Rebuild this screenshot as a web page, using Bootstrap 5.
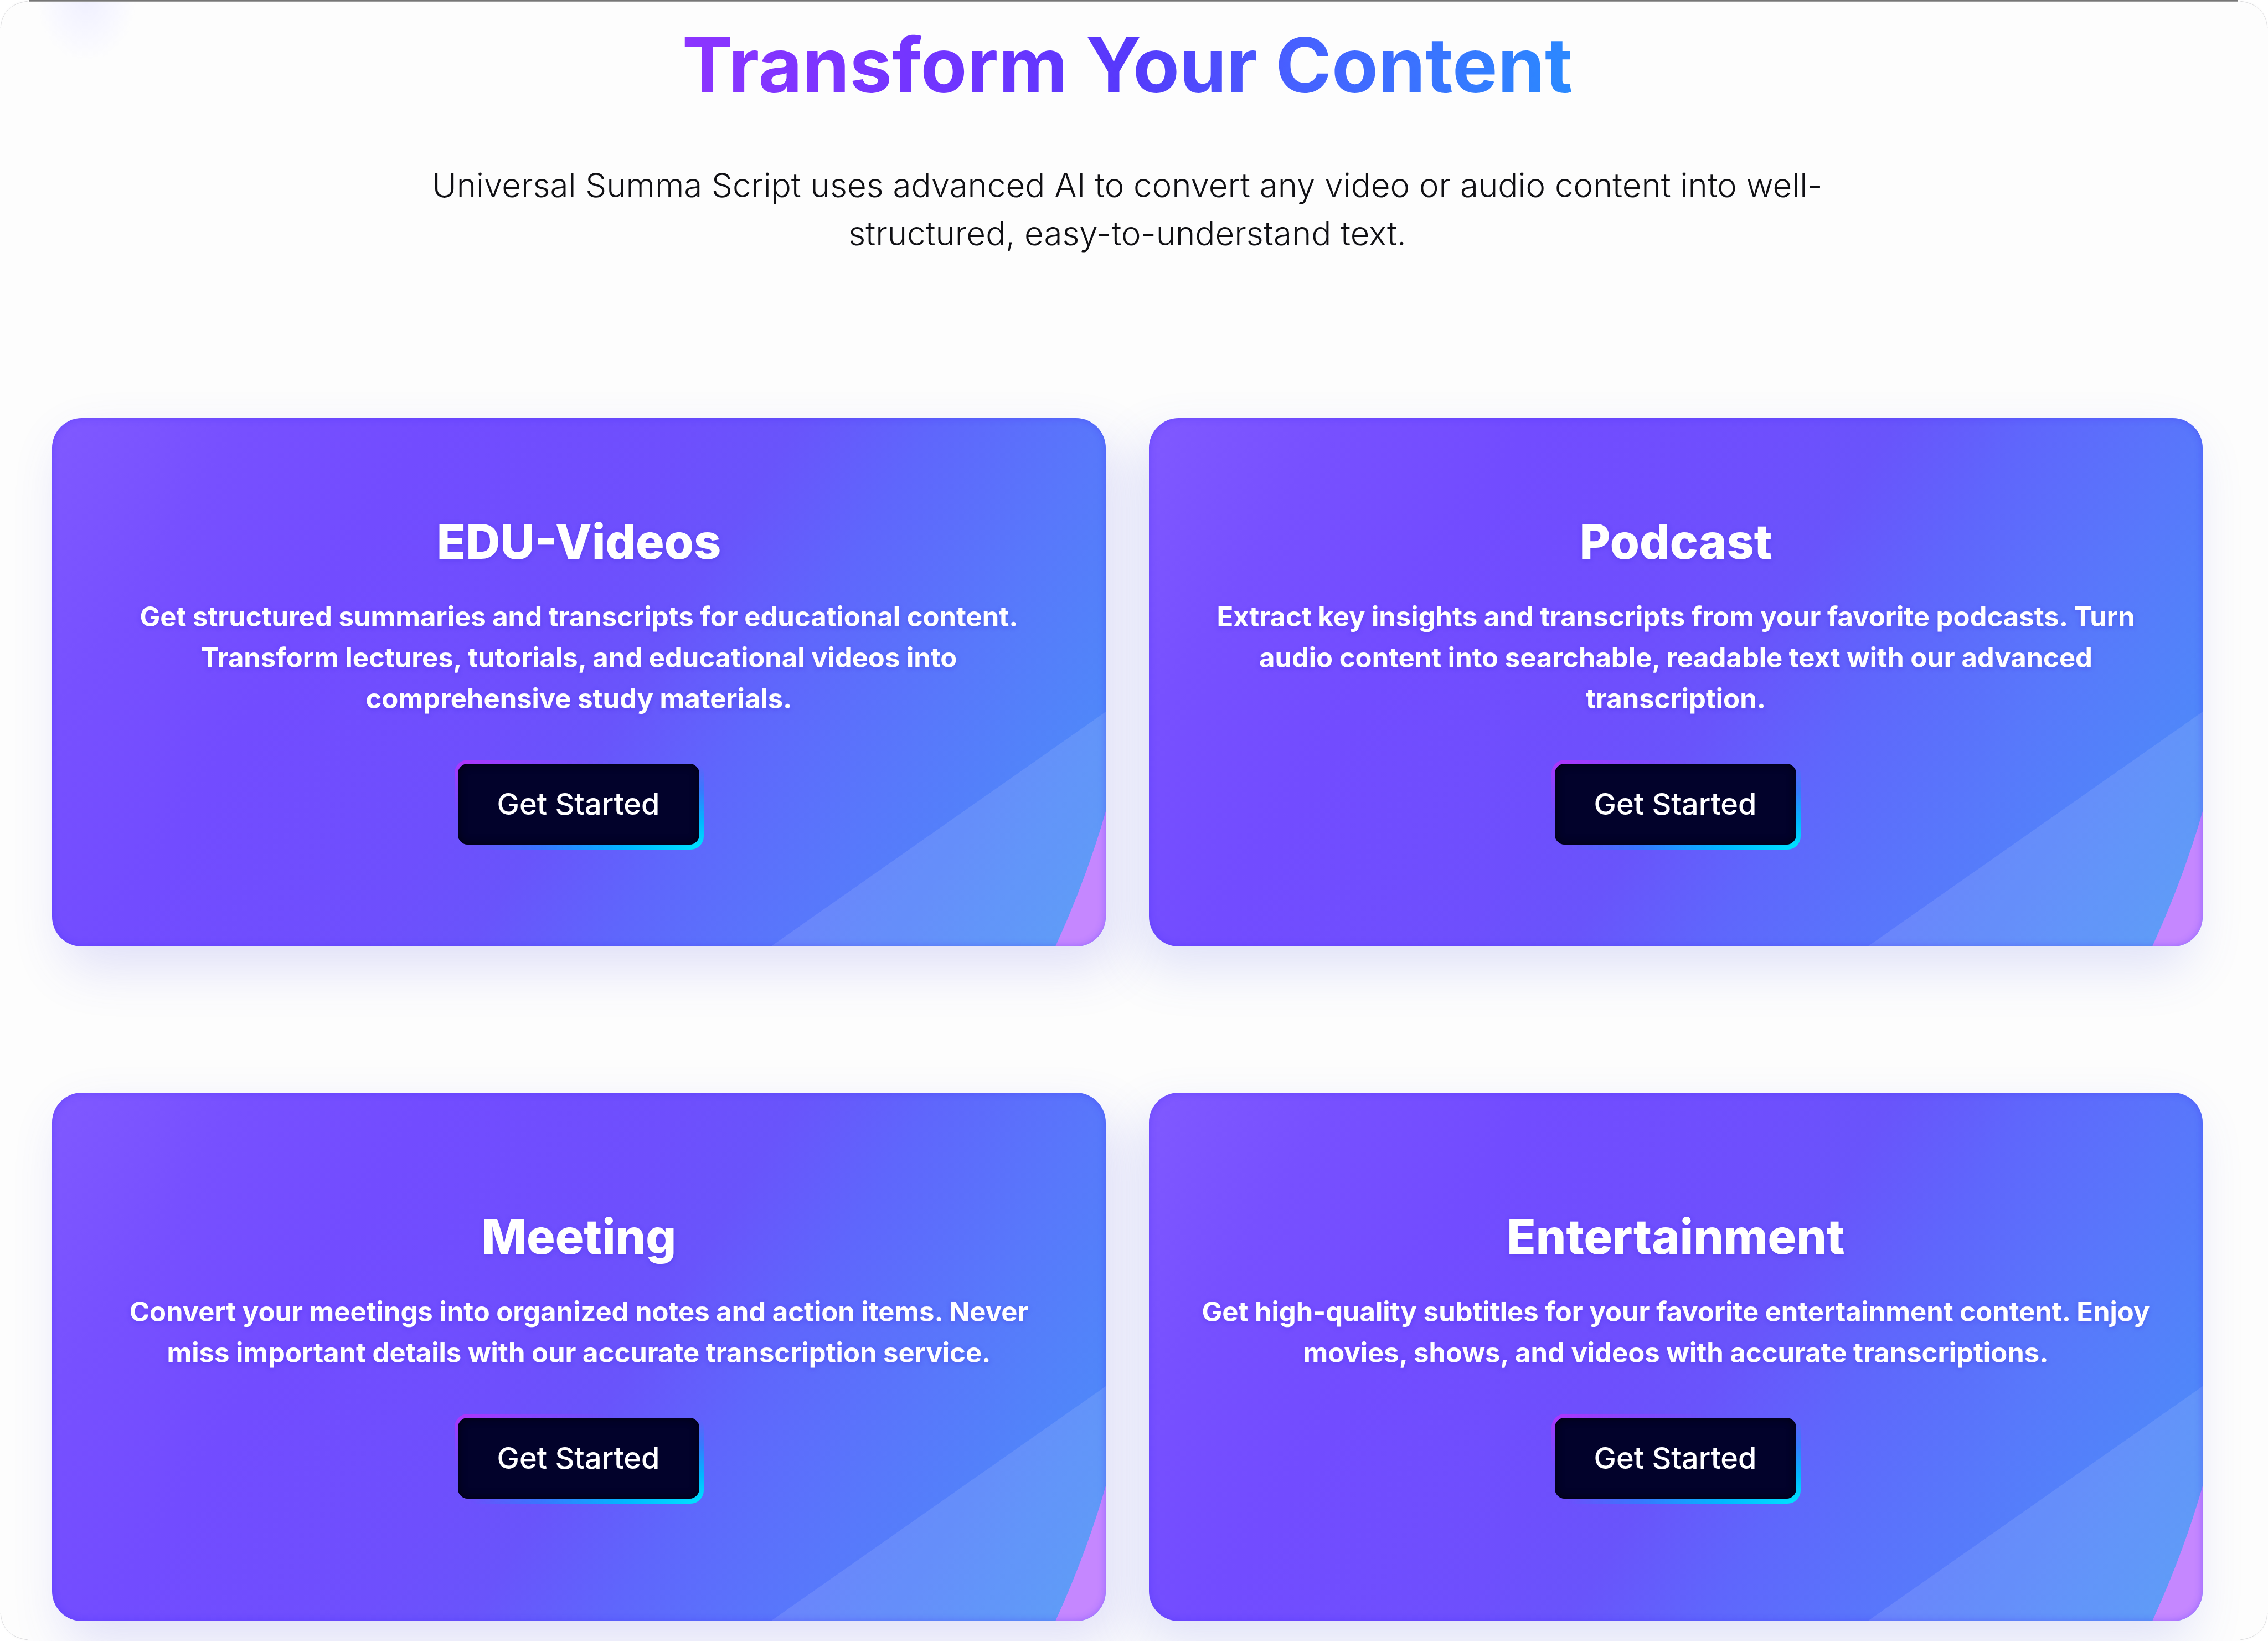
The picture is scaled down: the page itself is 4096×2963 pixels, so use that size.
<!DOCTYPE html>
<html lang="en">
<head>
<meta charset="utf-8">
<meta name="viewport" content="width=device-width, initial-scale=1">
<title>Transform Your Content</title>
<link href="https://cdn.jsdelivr.net/npm/bootstrap@5.3.0/dist/css/bootstrap.min.css" rel="stylesheet">
<style>
  body { font-family: Inter, "Open Sans", sans-serif; background: #fff; }
  .page-shell {
    border-radius: 50px;
    background: radial-gradient(ellipse 90px 110px at 156px 0, #f0f0ff 0, #f8f8ff 60%, #fdfdfd 100%) #fdfdfd;
    padding: 0 118px 36px 94px;
  }
  .top-rule {
    height: 3px;
    left: 52px;
    right: 54px;
    background: linear-gradient(#777 0 1px, #000 1px 2px, #9b9b9b 2px);
  }
  .corner { width: 52px; height: 52px; fill: none; stroke: #dcdcde; stroke-width: 1; }
  .hero-block { padding: 37px 0 290px; }
  .hero-title {
    font-size: 137px;
    line-height: 160px;
    font-weight: 700;
    margin-bottom: 94px;
    background: linear-gradient(100deg, #8d35ff 0%, #6a35ff 36%, #5639fb 50%, #4760ff 68%, #2a8aff 100%);
    -webkit-background-clip: text;
    background-clip: text;
    color: transparent;
  }
  .hero-text {
    font-size: 60px;
    line-height: 87px;
    font-weight: 300;
    color: #101014;
    max-width: 2600px;
  }
  .feature-row { --bs-gutter-x: 78px; --bs-gutter-y: 264px; z-index: 0; }
  .feature-card {
    --bs-card-border-width: 0;
    --bs-card-border-radius: 54px;
    min-height: 954px;
    padding: 0 91px;
    color: #fff;
    background: linear-gradient(122deg, #8059ff 0%, #7750ff 14%, #724cff 28%, #6e4ffd 46%, #6954fb 54%, #5f66fc 64%, #5878fb 77%, #4f88f9 90%, #4b94f6 100%);
  }
  .feature-card::before {
    content: "";
    position: absolute;
    inset: 0;
    z-index: -1;
    border-radius: 54px;
    box-shadow: 20px 40px 90px 0 rgba(84, 84, 224, .17);
  }
  .feature-row > :nth-child(even) .feature-card::before { box-shadow: -18px 40px 90px 0 rgba(84, 96, 224, .17); }
  .card-shapes { inset: 0; border-radius: 54px; overflow: hidden; }
  .card-rim {
    inset: 0;
    border-radius: 54px;
    box-shadow: inset 0 0 14px rgba(60, 40, 250, .35);
  }
  .feature-name { font-size: 86px; line-height: 96px; font-weight: 800; margin-bottom: 51px; }
  .feature-copy { font-size: 49px; line-height: 74px; font-weight: 700; margin-bottom: 73px; }
  .feature-name, .feature-copy { text-shadow: 0 2px 8px rgba(60, 40, 220, .35); }
  .glow-btn {
    border: 0;
    border-radius: 24px;
    padding: 7px 8px 9px 6px;
    background:
      radial-gradient(ellipse at 0 0, #b035fb 0, rgba(160, 60, 255, .5) 22%, rgba(120, 75, 255, 0) 45%),
      radial-gradient(ellipse at 100% 100%, #00e5ff 0, #00b8ff 22%, rgba(40, 130, 255, .75) 46%, rgba(90, 95, 255, 0) 66%);
  }
  .glow-face {
    width: 436px;
    height: 146px;
    border-radius: 18px;
    background: #02022b;
    box-shadow: inset 0 0 16px #00000f;
    color: #fff;
    font-size: 54px;
    line-height: 80px;
    font-weight: 500;
  }
</style>
</head>
<body>
<main class="page-shell position-relative overflow-hidden">
  <div class="top-rule position-absolute top-0" aria-hidden="true"></div>
  <svg class="corner position-absolute top-0 start-0" viewBox="0 0 52 52" aria-hidden="true"><path d="M1 51Q4 8 50 2"/></svg>
  <svg class="corner position-absolute top-0 end-0" viewBox="0 0 52 52" aria-hidden="true"><path d="M51 51Q48 8 2 2"/></svg>
  <svg class="corner position-absolute bottom-0 start-0" viewBox="0 0 52 52" aria-hidden="true"><path d="M1 1Q4 44 50 50"/></svg>
  <svg class="corner position-absolute bottom-0 end-0" viewBox="0 0 52 52" aria-hidden="true"><path d="M51 1Q48 44 2 50"/></svg>

  <header class="hero-block text-center">
    <h1 class="hero-title d-inline-block">Transform Your Content</h1>
    <p class="hero-text mx-auto mb-0">Universal Summa Script uses advanced AI to convert any video or audio content into well-structured, easy-to-understand text.</p>
  </header>

  <section class="row feature-row position-relative">
    <div class="col-6">
      <article class="card feature-card h-100 justify-content-center align-items-center text-center">
        <svg class="card-shapes position-absolute w-100 h-100" viewBox="0 0 1903 954" preserveAspectRatio="none" aria-hidden="true"><path d="M1298 954L1903 530V954Z" fill="#fff" fill-opacity=".11"/><path d="M1812 954Q1868 832 1903 710V954Z" fill="#c587ff"/></svg>
        <div class="card-rim position-absolute"></div>
        <h2 class="feature-name position-relative">EDU-Videos</h2>
        <p class="feature-copy position-relative">Get structured summaries and transcripts for educational content. Transform lectures, tutorials, and educational videos into comprehensive study materials.</p>
        <button type="button" class="btn glow-btn position-relative"><span class="glow-face d-flex align-items-center justify-content-center">Get Started</span></button>
      </article>
    </div>
    <div class="col-6">
      <article class="card feature-card h-100 justify-content-center align-items-center text-center">
        <svg class="card-shapes position-absolute w-100 h-100" viewBox="0 0 1903 954" preserveAspectRatio="none" aria-hidden="true"><path d="M1298 954L1903 530V954Z" fill="#fff" fill-opacity=".11"/><path d="M1812 954Q1868 832 1903 710V954Z" fill="#c587ff"/></svg>
        <div class="card-rim position-absolute"></div>
        <h2 class="feature-name position-relative">Podcast</h2>
        <p class="feature-copy position-relative">Extract key insights and transcripts from your favorite podcasts. Turn audio content into searchable, readable text with our advanced transcription.</p>
        <button type="button" class="btn glow-btn position-relative"><span class="glow-face d-flex align-items-center justify-content-center">Get Started</span></button>
      </article>
    </div>
    <div class="col-6">
      <article class="card feature-card h-100 justify-content-center align-items-center text-center">
        <svg class="card-shapes position-absolute w-100 h-100" viewBox="0 0 1903 954" preserveAspectRatio="none" aria-hidden="true"><path d="M1298 954L1903 530V954Z" fill="#fff" fill-opacity=".11"/><path d="M1812 954Q1868 832 1903 710V954Z" fill="#c587ff"/></svg>
        <div class="card-rim position-absolute"></div>
        <h2 class="feature-name position-relative">Meeting</h2>
        <p class="feature-copy position-relative">Convert your meetings into organized notes and action items. Never miss important details with our accurate transcription service.</p>
        <button type="button" class="btn glow-btn position-relative"><span class="glow-face d-flex align-items-center justify-content-center">Get Started</span></button>
      </article>
    </div>
    <div class="col-6">
      <article class="card feature-card h-100 justify-content-center align-items-center text-center">
        <svg class="card-shapes position-absolute w-100 h-100" viewBox="0 0 1903 954" preserveAspectRatio="none" aria-hidden="true"><path d="M1298 954L1903 530V954Z" fill="#fff" fill-opacity=".11"/><path d="M1812 954Q1868 832 1903 710V954Z" fill="#c587ff"/></svg>
        <div class="card-rim position-absolute"></div>
        <h2 class="feature-name position-relative">Entertainment</h2>
        <p class="feature-copy position-relative">Get high-quality subtitles for your favorite entertainment content. Enjoy movies, shows, and videos with accurate transcriptions.</p>
        <button type="button" class="btn glow-btn position-relative"><span class="glow-face d-flex align-items-center justify-content-center">Get Started</span></button>
      </article>
    </div>
  </section>
</main>
<script src="https://cdn.jsdelivr.net/npm/bootstrap@5.3.0/dist/js/bootstrap.bundle.min.js"></script>
</body>
</html>
